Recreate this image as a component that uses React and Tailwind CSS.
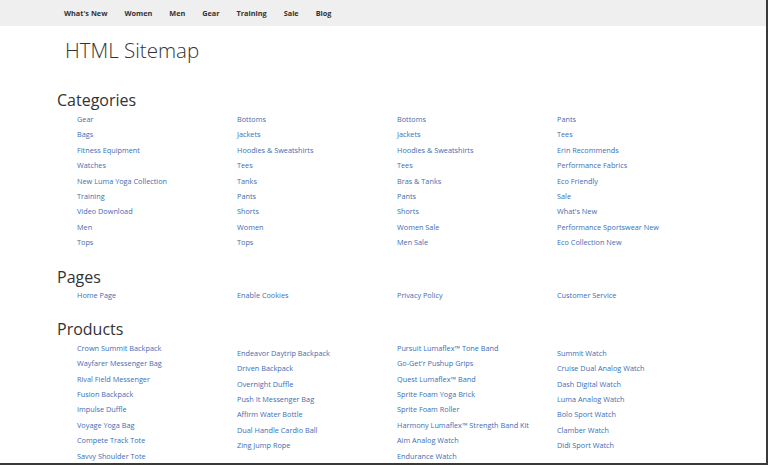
import React from "react";

const navItems = ["What's New", "Women", "Men", "Gear", "Training", "Sale", "Blog"];

const categories = [
  ["Gear", "Bags", "Fitness Equipment", "Watches", "New Luma Yoga Collection", "Training", "Video Download", "Men", "Tops"],
  ["Bottoms", "Jackets", "Hoodies & Sweatshirts", "Tees", "Tanks", "Pants", "Shorts", "Women", "Tops"],
  ["Bottoms", "Jackets", "Hoodies & Sweatshirts", "Tees", "Bras & Tanks", "Pants", "Shorts", "Women Sale", "Men Sale"],
  ["Pants", "Tees", "Erin Recommends", "Performance Fabrics", "Eco Friendly", "Sale", "What's New", "Performance Sportswear New", "Eco Collection New"],
];

const pages = [["Home Page"], ["Enable Cookies"], ["Privacy Policy"], ["Customer Service"]];

const products = [
  ["Crown Summit Backpack", "Wayfarer Messenger Bag", "Rival Field Messenger", "Fusion Backpack", "Impulse Duffle", "Voyage Yoga Bag", "Compete Track Tote", "Savvy Shoulder Tote"],
  ["Endeavor Daytrip Backpack", "Driven Backpack", "Overnight Duffle", "Push It Messenger Bag", "Affirm Water Bottle", "Dual Handle Cardio Ball", "Zing Jump Rope"],
  ["Pursuit Lumaflex™ Tone Band", "Go-Get'r Pushup Grips", "Quest Lumaflex™ Band", "Sprite Foam Yoga Brick", "Sprite Foam Roller", "Harmony Lumaflex™ Strength Band Kit", "Aim Analog Watch", "Endurance Watch"],
  ["Summit Watch", "Cruise Dual Analog Watch", "Dash Digital Watch", "Luma Analog Watch", "Bolo Sport Watch", "Clamber Watch", "Didi Sport Watch"],
];

function LinkGrid({ columns, offsetEven }) {
  return (
    <div className="ml-[20px] grid grid-cols-[160px_160px_160px_160px]">
      {columns.map((col, i) => (
        <ul key={i} className={i % 2 === 1 && offsetEven ? "pt-[5px]" : ""}>
          {col.map((item, j) => (
            <li key={j} className="h-[15.4px] leading-[15.4px] text-[7.3px] text-[#3c6eb4] whitespace-nowrap">
              <a href="#">{item}</a>
            </li>
          ))}
        </ul>
      ))}
    </div>
  );
}

export default function App() {
  return (
    <div className="relative w-[768px] h-[465px] overflow-hidden bg-white font-['Open_Sans',sans-serif] text-[#333]">
      <nav className="h-[26px] w-[766px] bg-[#efefef] flex items-center pl-[64px] gap-[17px] text-[7.3px] font-bold">
        {navItems.map((item) => (
          <a key={item} href="#">{item}</a>
        ))}
      </nav>
      <main className="pl-[57px]">
        <h1 className="ml-[8px] mt-[10px] text-[20.5px] leading-[28px] font-light">HTML Sitemap</h1>

        <h2 className="mt-[26px] text-[16px] leading-[20px]">Categories</h2>
        <div className="mt-[2px]">
          <LinkGrid columns={categories} />
        </div>

        <h2 className="mt-[16px] text-[16px] leading-[20px]">Pages</h2>
        <div className="mt-[1px]">
          <LinkGrid columns={pages} />
        </div>

        <h2 className="mt-[16px] text-[16px] leading-[20px]">Products</h2>
        <div className="mt-[2px]">
          <LinkGrid columns={products} offsetEven />
        </div>
      </main>
      <div className="absolute right-0 top-0 h-full w-[2px] bg-[#3a3a3a]" />
      <div className="absolute bottom-0 left-0 w-full h-[2px] bg-[#3a3a3a]" />
    </div>
  );
}
